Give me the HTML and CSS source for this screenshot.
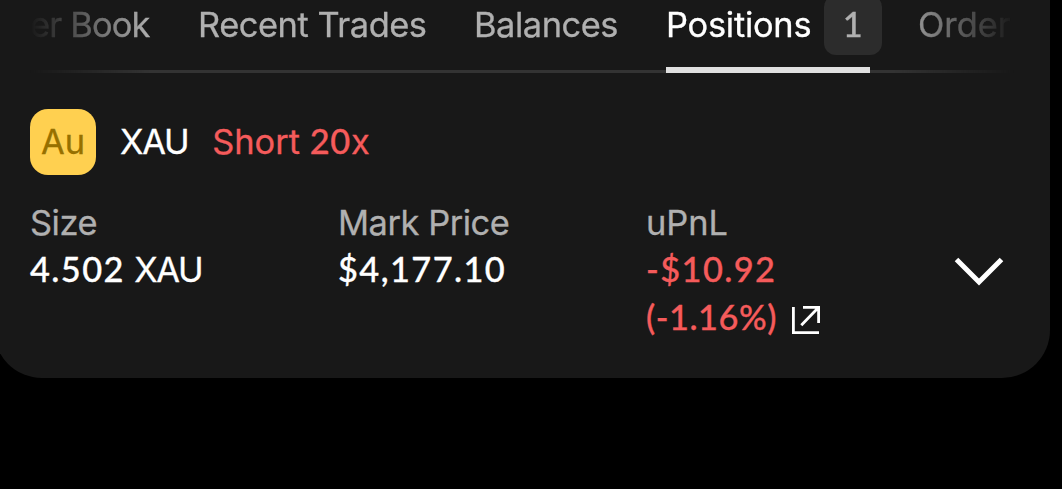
FILE: index.html
```html
<!DOCTYPE html>
<html lang="en">
<head>
    <meta charset="UTF-8">
    <meta name="viewport" content="width=device-width, initial-scale=1.0">
    <title>Positions</title>
    <link rel="stylesheet" href="styles.css">
</head>
<body>

    <div class="panel">
        <nav class="tabs">
            <a class="tab tab-book">er Book</a>
            <a class="tab tab-trades">Recent Trades</a>
            <a class="tab tab-balances">Balances</a>
            <a class="tab tab-positions active">Positions <span class="badge num">1</span></a>
            <a class="tab tab-orders">Order</a>
        </nav>

        <div class="position">
            <div class="position-header">
                <span class="token">Au</span>
                <span class="symbol">XAU</span>
                <span class="side">Short <span class="num">20</span>x</span>
            </div>

            <div class="position-stats">
                <div class="stat">
                    <div class="stat-label">Size</div>
                    <div class="stat-value"><span class="num">4.502</span> <span class="symbol">XAU</span></div>
                </div>
                <div class="stat">
                    <div class="stat-label">Mark Price</div>
                    <div class="stat-value num price">$4,177.10</div>
                </div>
                <div class="stat">
                    <div class="stat-label label-pnl">uPnL</div>
                    <div class="stat-value num price loss">-$10.92</div>
                    <div class="stat-value num loss pnl-row">
                        <span>(-1.16%)</span>
                        <svg class="share-icon" viewBox="0 0 30 30" fill="none" stroke="#fff" stroke-width="2.8">
                            <path d="M2.4 2v25.6H28M12 2.4h15.6V18M10.3 20.2L27.2 2.8"/>
                        </svg>
                    </div>
                </div>
                <svg class="chevron" viewBox="0 0 50 30" fill="none" stroke="#fff" stroke-width="5">
                    <path d="M2.5 2.5L25 25L47.5 2.5"/>
                </svg>
            </div>
        </div>
    </div>

</body>
</html>
```
FILE: styles.css
```css
body {
    margin: 0;
    min-height: 100vh;
    background-color: #000;
    font-family: Inter, "Liberation Sans", sans-serif;
    font-size: 34.4px;
    font-weight: 400;
    letter-spacing: -0.45px;
    line-height: 48px;
    color: #fff;
    -webkit-text-stroke: 0.3px currentColor; /* a touch heavier than regular */
    overflow: hidden;
}

.num {
    font-family: Lato, Inter, sans-serif;
    font-weight: 500;
    letter-spacing: 0.7px;
}

/* Card, slightly wider than the screen on the left */
.panel {
    box-sizing: border-box;
    width: 1056px;
    height: 378px;
    margin-left: -6px;
    padding: 0 36px;
    background-color: #181818;
    border-radius: 0 0 48px 48px;
}

/* Tabs */
.tabs {
    display: flex;
    gap: 48px;
    height: 73px;
    box-sizing: border-box;
    overflow: hidden;
    background: linear-gradient(#333, #333) 0 100% / 100% 3px no-repeat;
    -webkit-mask-image: linear-gradient(to right, transparent, #000 120px, #000 864px, transparent);
    mask-image: linear-gradient(to right, transparent, #000 120px, #000 864px, transparent);
}

.tab {
    box-sizing: border-box;
    flex: none;
    height: 73px;
    padding-top: 1px;
    color: #b0b0b0;
    white-space: nowrap;
}

.tab-book {
    width: 120px;
    letter-spacing: -0.8px;
}

.tab-trades {
    width: 228px;
}

.tab-balances {
    width: 144px;
}

.tab-positions {
    display: flex;
    width: 204px;
    letter-spacing: -0.25px;
}

.tab-orders {
    letter-spacing: 0;
}

.tab.active {
    color: #fff;
    border-bottom: 6px solid #e0e0e0;
}

.badge {
    flex: none;
    width: 58px;
    height: 60px;
    margin: -6px -12px 0 auto;
    border-radius: 12px;
    background-color: #2c2c2c;
    color: #b0b0b0;
    line-height: 58px;
    text-align: center;
}

/* Position header */
.position-header {
    display: flex;
    align-items: center;
    height: 66px;
    margin-top: 36px;
}

.token {
    width: 66px;
    margin-right: 24px;
    border-radius: 18px;
    background-color: #ffd050;
    color: #977000;
    letter-spacing: 0;
    line-height: 66px;
    text-align: center;
}

.symbol {
    letter-spacing: -1.3px;
}

.position-header .symbol {
    margin-right: 24px;
}

.side {
    height: 50px;
    letter-spacing: 0;
}

.side,
.loss {
    color: #f55b5b;
}

/* Stats */
.position-stats {
    display: grid;
    grid-template-columns: 308px 308px 308px 50px;
    align-items: start;
    margin-top: 24px;
}

.stat-label {
    height: 46px;
    color: #b0b0b0;
}

.label-pnl {
    letter-spacing: 0;
}

.stat-value {
    white-space: nowrap;
    line-height: 48px;
}

.stat-value .num {
    letter-spacing: 1.4px;
}

.price {
    letter-spacing: 1.4px;
}

.pnl-row {
    display: flex;
    letter-spacing: 0.5px;
}

.share-icon {
    width: 30px;
    height: 30px;
    margin: 12px 0 0 14px;
}

.chevron {
    width: 50px;
    height: 30px;
    margin-top: 58px;
}
```
